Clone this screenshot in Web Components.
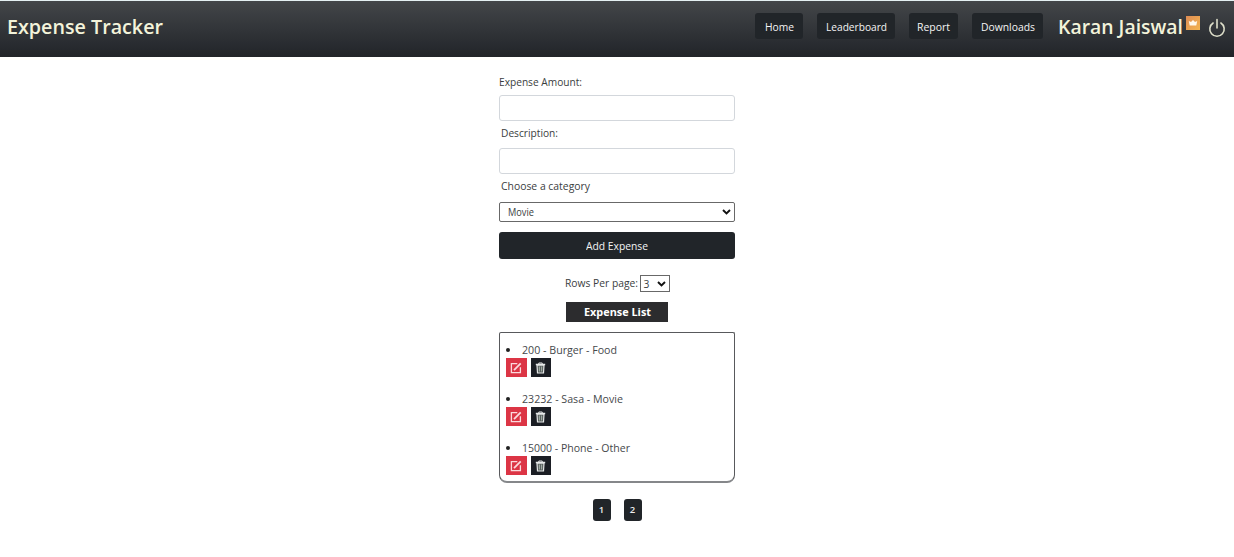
<!DOCTYPE html>
<html lang="en"><head><meta charset="utf-8"><title>Expense Tracker</title>
<style>
html,body{margin:0;height:100%;background:#fff;overflow:hidden}
body{font:11px/16px "Open Sans","Noto Sans",sans-serif;color:#3a3d40}
</style></head><body>
<expense-app></expense-app>
<script>
const define=(name,html,ready)=>{
  const t=document.createElement('template');t.innerHTML=html;
  customElements.define(name,class extends HTMLElement{
    connectedCallback(){
      if(this.shadowRoot)return;
      this.attachShadow({mode:'open'}).append(t.content.cloneNode(true));
      if(ready)ready.call(this,this.shadowRoot);
    }
  });
};
// A run of text condensed to a given advance width.
define('fit-text',`<style>:host{display:inline-block;white-space:nowrap}span{display:inline-block;transform-origin:0 50%}</style><span><slot></slot></span>`,function(r){
  const s=r.querySelector('span'),w=+this.getAttribute('w');
  const natural=s.getBoundingClientRect().width;
  s.style.transform='scaleX('+w/natural+')';
  this.style.width=w+'px';
});
define('nav-button',`<style>:host{display:flex;align-items:center;justify-content:center;box-sizing:border-box;height:26px;border-radius:3px;background:#212529;color:#f4f4f4;line-height:16px;padding-top:2px}</style><slot></slot>`);
define('crown-badge',`<style>:host{display:block;width:14px;height:14px}svg{display:block}</style>
<svg width="14" height="14" viewBox="0 0 14 14"><defs><linearGradient id="g" x1="0" y1="0" x2="1" y2="1"><stop offset="0" stop-color="#dd8c55"/><stop offset="1" stop-color="#f5b54e"/></linearGradient></defs><rect width="14" height="14" fill="url(#g)"/><path d="M2.8 5 5 6 7 4l2 2 2.2-1-.9 4.6H3.7z" fill="#fff8ea"/></svg>`);
define('power-icon',`<style>:host{display:block;width:18px;height:20px}svg{display:block}</style>
<svg width="18" height="20" viewBox="0 0 18 20" fill="none" stroke="#dedfca" stroke-width="1.6" stroke-linecap="round"><path d="M9 1.5v8.5M5.1 5a7.2 7.2 0 1 0 7.8 0"/></svg>`);
define('app-header',`<style>
:host{display:flex;box-sizing:border-box;height:57px;border-top:1px solid #e4f0f2;background:linear-gradient(#434649,#212429) padding-box;padding:0 8px 0 7px;color:#f3f3da}
.brand,.user{font-size:20.3px;font-weight:600;line-height:28px;margin-top:11px}
.brand{margin-right:auto}
nav{display:flex;margin-top:12px;gap:14px}
.user{margin-left:15px}
crown-badge{margin:15px 8px 0 4px}
power-icon{margin-top:17px}
</style>
<div class="brand"><fit-text w="156">Expense Tracker</fit-text></div>
<nav><nav-button style="width:48px"><fit-text w="29">Home</fit-text></nav-button>
<nav-button style="width:78px"><fit-text w="61">Leaderboard</fit-text></nav-button>
<nav-button style="width:49px"><fit-text w="33">Report</fit-text></nav-button>
<nav-button style="width:71px"><fit-text w="54">Downloads</fit-text></nav-button></nav>
<div class="user"><fit-text w="125">Karan Jaiswal</fit-text></div><crown-badge style="margin-left:3px"></crown-badge><power-icon></power-icon>`);
define('text-field',`<style>:host{display:block;height:26px}input{display:block;box-sizing:border-box;width:100%;height:26px;border:1px solid #d3d7dc;border-radius:3px;background:#fff;outline:0;padding:0 8px;font:inherit}</style><input type="text">`);
define('select-box',`<style>:host{display:flex;box-sizing:border-box;align-items:center;justify-content:space-between;border:1px solid #686868;background:#fff;padding:0 3px;font-size:10.3px;line-height:14px}svg{display:block}</style><slot></slot><svg width="9" height="6" viewBox="0 0 9 6"><path d="m1 1 3.5 3.5L8 1" fill="none" stroke="#111" stroke-width="1.9"/></svg>`);
define('expense-item',`<style>
:host{display:block;color:#45484b}
.t{display:flex;align-items:center;height:17px}
.t i{width:4px;height:4px;border-radius:50%;background:#202020;margin-right:12px}
.b{display:flex;gap:4px;height:19px}
button{display:grid;place-items:center;width:20.5px;height:19px;border:0;padding:0;background:#dc3545}
button+button{background:#1b1e24}svg{display:block}
</style><div class="t"><i></i><slot></slot></div><div class="b">
<button aria-label="Edit"><svg width="12" height="12" viewBox="0 0 12 12" fill="none" stroke="#fbd9dc" stroke-width="1.3"><path d="M7.3 1.6H1.4v9h9V5.3"/><path d="M4 8.2 10.7 1.3" stroke-width="1.8"/></svg></button>
<button aria-label="Delete"><svg width="11" height="12" viewBox="0 0 11 12" fill="none" stroke="#e6e8e8"><path d="M.8 2.5h9.4" stroke-width="1.5"/><path d="M3.8 2V1h3.4v1" /><path d="M2 3.2 2.5 11h6L9 3.2z" fill="#59605f" stroke-width="1.2"/><path d="M4.4 4.5v5M6.6 4.5v5" stroke="#afbcb2" stroke-width=".9"/></svg></button></div>`);
define('page-button',`<style>:host{display:block}button{display:block;width:18px;height:22px;border:0;border-radius:3px;background:#212529;color:#eee;font:600 9.5px/20px "Open Sans",sans-serif;padding:0 0 1px}</style><button><slot></slot></button>`);
define('expense-app',`<style>
:host{display:block}
main{display:flex;flex-direction:column;width:236px;margin:0 0 0 499px;padding-top:17px}
.l{height:16px}.l2{padding-left:2px}
.cat{height:20px;border-radius:2px;margin-top:8px;padding:0 3px 0 8px}
.add{height:27px;margin-top:10px;padding-top:1px}
.rows{display:flex;justify-content:center;gap:2px;height:17px;margin-top:16px}
.rows select-box{width:30px}
h2{display:flex;align-items:center;justify-content:center;align-self:center;width:102px;height:20px;margin:10px 0 0;background:#2c2c2e;color:#fff;font-size:11.3px;line-height:16px;font-weight:700}
.list{display:flex;flex-direction:column;gap:13px;box-sizing:border-box;height:151px;margin-top:10px;padding:8px 6px 0;border:1px solid #58595c;border-bottom:2px solid #85878a;border-radius:2px 2px 8px 8px}
.pages{display:flex;justify-content:center;gap:13px;margin-top:16px}
</style>
<app-header></app-header>
<main>
<div class="l"><fit-text w="83">Expense Amount:</fit-text></div>
<text-field style="margin-top:5px"></text-field>
<div class="l l2" style="margin-top:4px"><fit-text w="57">Description:</fit-text></div>
<text-field style="margin-top:7px"></text-field>
<div class="l l2" style="margin-top:4px"><fit-text w="89">Choose a category</fit-text></div>
<select-box class="cat"><fit-text w="26">Movie</fit-text></select-box>
<nav-button class="add"><fit-text w="62">Add Expense</fit-text></nav-button>
<div class="rows"><fit-text w="73">Rows Per page:</fit-text><select-box>3</select-box></div>
<h2><fit-text w="67">Expense List</fit-text></h2>
<div class="list">
<expense-item><fit-text w="95">200 - Burger - Food</fit-text></expense-item>
<expense-item><fit-text w="101">23232 - Sasa - Movie</fit-text></expense-item>
<expense-item><fit-text w="108">15000 - Phone - Other</fit-text></expense-item>
</div>
<div class="pages"><page-button>1</page-button><page-button>2</page-button></div>
</main>`);
</script></body></html>
